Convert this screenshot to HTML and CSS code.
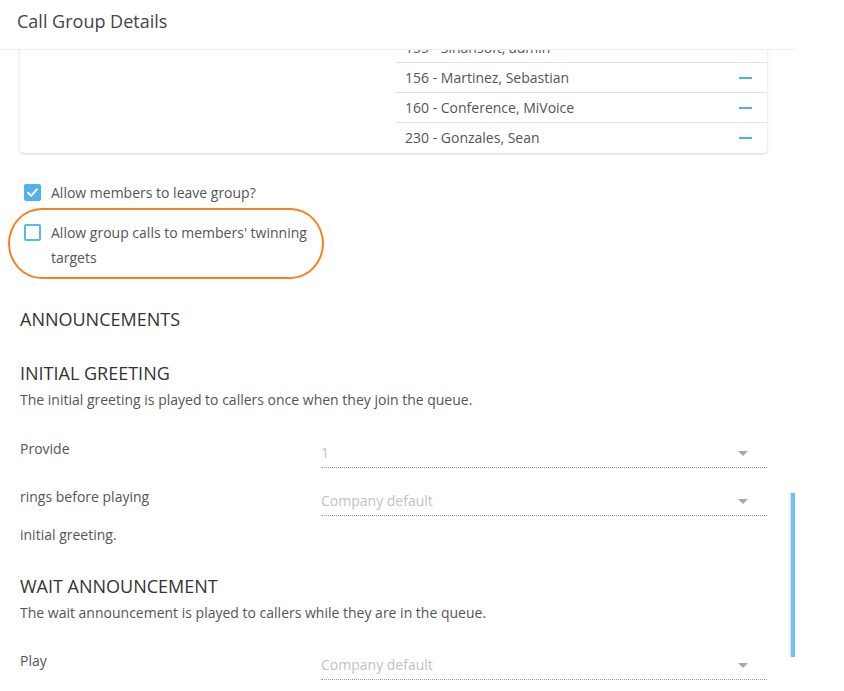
FILE: index.html
```html
<!DOCTYPE html>
<html>
<head>
    <title>Call Group Details</title>
    <link rel="stylesheet" href="styles.css">
</head>
<body>
    <div class="dialog">
        <header class="dialog-header">
            <h1>Call Group Details</h1>
        </header>

        <div class="dialog-body">
            <div class="scroll-content">
                <div class="members-card">
                    <div class="members-available"></div>
                    <ul class="members-list">
                        <li><span>155 - Sinansoft, admin</span><button class="remove-btn" title="Remove"></button></li>
                        <li><span>156 - Martinez, Sebastian</span><button class="remove-btn" title="Remove"></button></li>
                        <li><span>160 - Conference, MiVoice</span><button class="remove-btn" title="Remove"></button></li>
                        <li><span>230 - Gonzales, Sean</span><button class="remove-btn" title="Remove"></button></li>
                    </ul>
                </div>

                <div class="options">
                    <label class="option">
                        <span class="checkbox checked">
                            <svg viewBox="0 0 17 17" width="17" height="17"><path d="M4 8.8 L7.2 11.8 L13 5.2" fill="none" stroke="#fff" stroke-width="2" stroke-linecap="round" stroke-linejoin="round"/></svg>
                        </span>
                        <span class="option-text">Allow members to leave group?</span>
                    </label>
                    <label class="option highlighted">
                        <span class="checkbox"></span>
                        <span class="option-text">Allow group calls to members' twinning targets</span>
                    </label>
                </div>

                <h2 class="section-title announcements">Announcements</h2>

                <div class="subsection">
                    <h3 class="section-title">Initial Greeting</h3>
                    <p class="section-desc">The initial greeting is played to callers once when they join the queue.</p>
                    <div class="form-grid greeting-grid">
                        <div class="form-label">Provide</div>
                        <div class="select-field"><span class="select-value">1</span><span class="caret"></span></div>
                        <div class="form-label">rings before playing</div>
                        <div class="select-field"><span class="select-value">Company default</span><span class="caret"></span></div>
                        <div class="form-label">initial greeting.</div>
                        <div></div>
                    </div>
                </div>

                <div class="subsection">
                    <h3 class="section-title">Wait Announcement</h3>
                    <p class="section-desc">The wait announcement is played to callers while they are in the queue.</p>
                    <div class="form-grid">
                        <div class="form-label">Play</div>
                        <div class="select-field"><span class="select-value">Company default</span><span class="caret"></span></div>
                    </div>
                </div>
            </div>

            <div class="scroll-thumb"></div>
        </div>
    </div>
</body>
</html>
```

FILE: styles.css
```css
body {
    margin: 0;
    padding: 0;
    background: #fff;
    font-family: 'Open Sans', 'Liberation Sans', sans-serif;
    font-size: 14px;
    color: #555;
}

.dialog {
    width: 795px;
    height: 691px;
    display: flex;
    flex-direction: column;
    overflow: hidden;
}

.dialog-header {
    height: 40px;
    padding: 9px 17px 0;
    border-bottom: 1px solid #ebebeb;
    flex-shrink: 0;
}

.dialog-header h1 {
    margin: 0;
    font-size: 18px;
    font-weight: 400;
    line-height: 24px;
    color: #444;
}

.dialog-body {
    flex: 1;
    position: relative;
    overflow: hidden;
}

/* content is scrolled down a little, first member row sits under the header */
.scroll-content {
    margin-top: -17px;
    padding: 0 28px 40px 20px;
}

.members-card {
    display: grid;
    grid-template-columns: 375px 1fr;
    border-radius: 4px;
    box-shadow: 0 1px 3px rgba(0, 0, 0, 0.18);
    background: #fff;
}

.members-list {
    list-style: none;
    margin: 0;
    padding: 0 0 1px;
}

.members-list li {
    display: flex;
    align-items: center;
    justify-content: space-between;
    height: 29px;
    padding: 0 15px 0 10px;
    border-top: 1px solid #e2e2e2;
    font-size: 14px;
    color: #555;
}

.members-list li:first-child {
    border-top: none;
}

.remove-btn {
    width: 13px;
    height: 2px;
    padding: 0;
    border: none;
    background: #4fb3e8;
    cursor: pointer;
}

.options {
    margin-top: 27px;
    max-width: 300px;
    display: flex;
    flex-direction: column;
    gap: 15px;
}

.option {
    display: flex;
    align-items: flex-start;
    gap: 10px;
    line-height: 25px;
    cursor: pointer;
}

.option.highlighted {
    position: relative;
}

/* orange annotation ring around the twinning option */
.option.highlighted::after {
    content: '';
    position: absolute;
    top: -12px;
    bottom: -9px;
    left: -12px;
    right: -4px;
    border: 2px solid #f5821f;
    border-radius: 34px / 36px;
    pointer-events: none;
}

.checkbox {
    flex-shrink: 0;
    width: 17px;
    height: 17px;
    margin: 4px 0 0 4px;
    box-sizing: border-box;
    border: 2px solid #5cb8ea;
    border-radius: 2px;
    background: #fff;
}

.checkbox.checked {
    border: none;
    background: #4fb2ea;
}

.checkbox svg {
    display: block;
}

.section-title {
    margin: 0;
    font-size: 18px;
    font-weight: 400;
    line-height: 26px;
    text-transform: uppercase;
    color: #333;
}

.announcements {
    margin-top: 36px;
}

.subsection {
    margin-top: 28px;
}

.subsection + .subsection {
    margin-top: 26px;
}

.section-desc {
    margin: 2px 0 0;
    line-height: 24px;
}

.form-grid {
    margin-top: 24px;
    display: grid;
    grid-template-columns: 301px 1fr;
    row-gap: 17px;
}

.greeting-grid {
    margin-top: 25px;
    grid-template-rows: 48px 38px auto;
    row-gap: 0;
}

.form-label {
    line-height: 24px;
}

.select-field {
    display: flex;
    align-items: center;
    justify-content: space-between;
    align-self: start;
    padding: 4px 19px 2px 0;
    line-height: 24px;
    border-bottom: 1px dotted #999;
}

.select-value {
    color: #c2c2c2;
}

.caret {
    width: 0;
    height: 0;
    border-left: 5px solid transparent;
    border-right: 5px solid transparent;
    border-top: 5px solid #aaa;
}

.scroll-thumb {
    position: absolute;
    right: 0;
    top: 443px;
    width: 4px;
    height: 164px;
    background: #73bef4;
    box-shadow: -1px 0 2px rgba(0, 0, 0, 0.15);
}
```
